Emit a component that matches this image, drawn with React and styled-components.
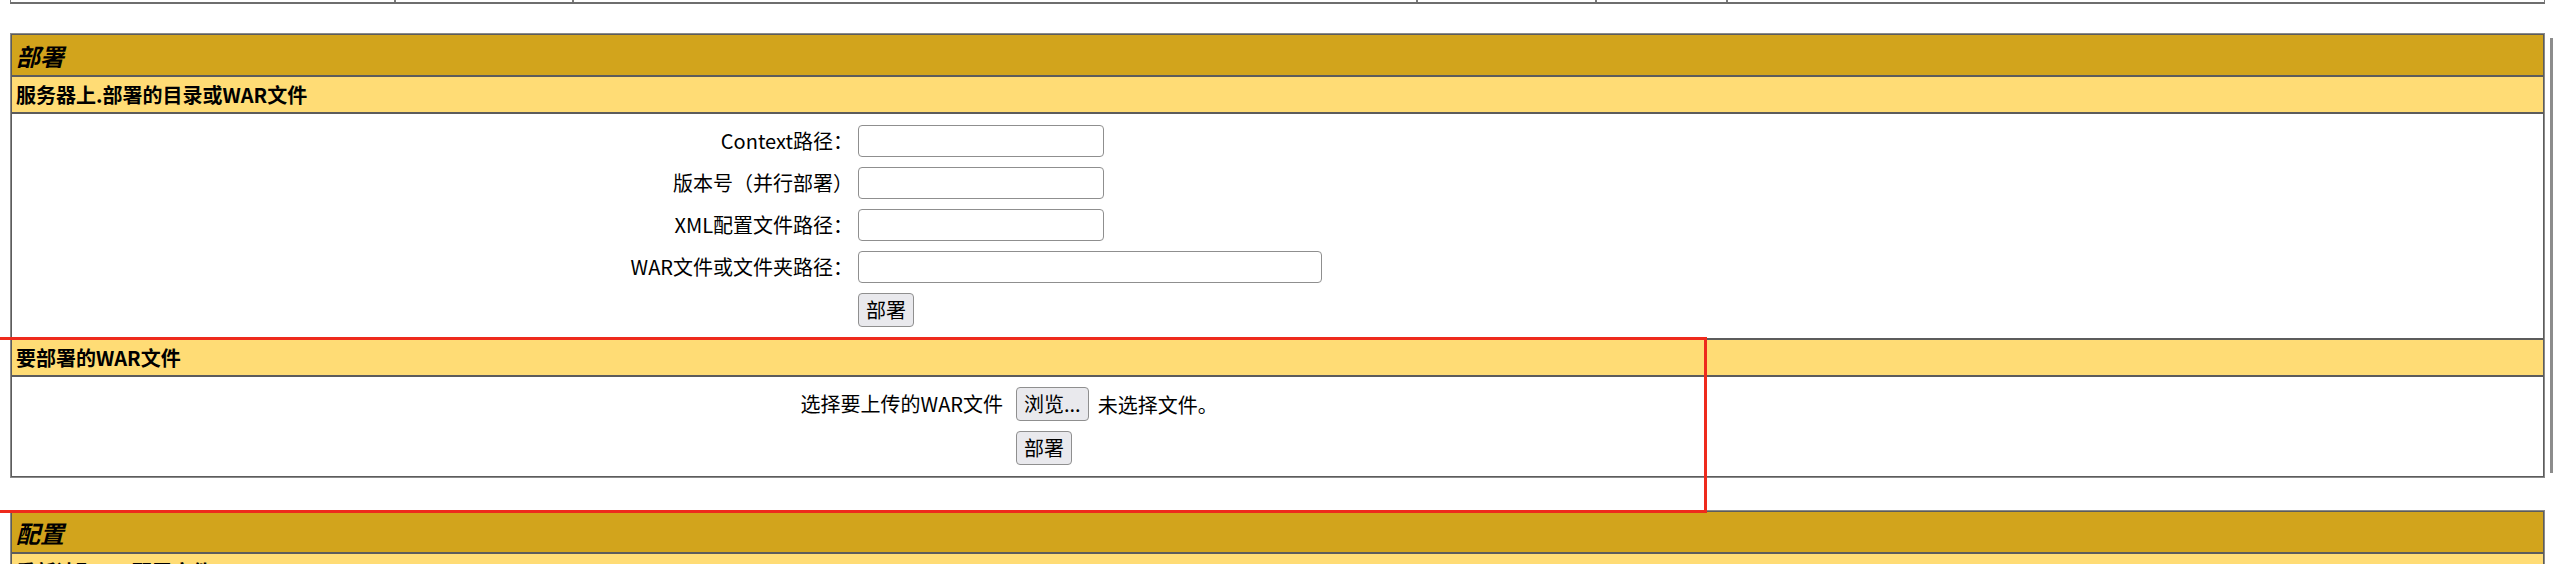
import React from "react";
import styled, { createGlobalStyle } from "styled-components";

const Global = createGlobalStyle`
  html, body {
    margin: 0;
    padding: 0;
    overflow: hidden;
    background: #fff;
  }
  body {
    font-family: "Noto Sans CJK SC", "Noto Sans", sans-serif;
    color: #000;
  }
  * { box-sizing: border-box; }
`;

const Page = styled.div`
  position: relative;
  width: 2556px;
  height: 564px;
  overflow: hidden;
  padding: 0 11px 0 10px;
`;

const TopStrip = styled.div`
  display: flex;
  height: 4px;
  border-left: 1px solid #7a7a7a;
  border-right: 1px solid #7a7a7a;
  border-bottom: 2px solid #6e6e6e;
`;

const StripCell = styled.div`
  flex: ${(p) => (p.$w ? `0 0 ${p.$w}px` : "1 1 auto")};
  border-right: ${(p) => (p.$last ? "none" : "2px solid #7a7a7a")};
`;

const Section = styled.section`
  margin-top: ${(p) => p.$mt}px;
  border: 1px solid #8a8a8a;
  display: flex;
  flex-direction: column;
`;

const Cell = styled.div`
  border: 1px solid #5c5c5c;
`;

const TitleCell = styled(Cell)`
  background: #d2a41c;
  height: 42px;
  padding: 0 4px;
  display: flex;
  align-items: center;
  font-size: 24px;
  font-weight: bold;
  font-style: italic;
`;

const HeaderCell = styled(Cell)`
  background: #ffdc75;
  height: 37px;
  padding: 0 4px;
  display: flex;
  align-items: center;
  font-size: 20px;
  font-weight: bold;
`;

const BodyCell = styled(Cell)`
  background: #fff;
  padding: ${(p) => p.$pt}px 0 ${(p) => p.$pb}px;
`;

const FormGrid = styled.div`
  display: grid;
  grid-template-columns: ${(p) => p.$labelWidth}px auto;
  column-gap: ${(p) => p.$gap}px;
  row-gap: 10px;
  align-items: center;
  justify-items: start;
`;

const Label = styled.span`
  justify-self: end;
  font-size: 20px;
  white-space: nowrap;
  line-height: 1.2;
`;

const TextInput = styled.input`
  width: ${(p) => p.$w}px;
  height: 32px;
  border: 1px solid #8f8f8f;
  border-radius: 4px;
  background: #fff;
  font-size: 20px;
  padding: 0 4px;
  margin: 0;
`;

const Button = styled.button`
  height: 34px;
  padding: 0 7px;
  margin: 0;
  border: 1px solid #8f8f8f;
  border-radius: 4px;
  background: #e9e9ed;
  font-family: "Noto Sans CJK SC", "Noto Sans", sans-serif;
  font-size: 20px;
  line-height: 1;
  color: #000;
`;

const FilePicker = styled.div`
  display: flex;
  align-items: center;
  gap: 9px;
  font-size: 20px;
`;

const Empty = styled.span``;

const RedBox = styled.div`
  position: absolute;
  left: -4px;
  top: 337px;
  width: 1711px;
  height: 176px;
  border: 3px solid #ee2a1c;
  pointer-events: none;
`;

const ScrollThumb = styled.div`
  position: absolute;
  left: 2550px;
  top: 38px;
  width: 3px;
  height: 435px;
  background: #8c8c8c;
`;

const serverFields = [
  { label: "Context路径：", w: 246 },
  { label: "版本号（并行部署）", w: 246 },
  { label: "XML配置文件路径：", w: 246 },
  { label: "WAR文件或文件夹路径：", w: 464 },
];

export default function App() {
  return (
    <>
      <Global />
      <Page>
        <TopStrip>
          <StripCell $w={385} />
          <StripCell $w={178} />
          <StripCell $w={844} />
          <StripCell $w={179} />
          <StripCell $w={131} />
          <StripCell $last />
        </TopStrip>

        <Section $mt={29}>
          <TitleCell>部署</TitleCell>
          <HeaderCell>服务器上.部署的目录或WAR文件</HeaderCell>
          <BodyCell $pt={11} $pb={11}>
            <FormGrid $labelWidth={841} $gap={5}>
              {serverFields.map((f) => (
                <React.Fragment key={f.label}>
                  <Label>{f.label}</Label>
                  <TextInput type="text" $w={f.w} />
                </React.Fragment>
              ))}
              <Empty />
              <Button type="button">部署</Button>
            </FormGrid>
          </BodyCell>
          <HeaderCell>要部署的WAR文件</HeaderCell>
          <BodyCell $pt={10} $pb={11}>
            <FormGrid $labelWidth={991} $gap={13}>
              <Label>选择要上传的WAR文件</Label>
              <FilePicker>
                <Button type="button">浏览...</Button>
                <span>未选择文件。</span>
              </FilePicker>
              <Empty />
              <Button type="button">部署</Button>
            </FormGrid>
          </BodyCell>
        </Section>

        <Section $mt={32}>
          <TitleCell>配置</TitleCell>
          <HeaderCell>重新读取TLS配置文件</HeaderCell>
        </Section>

        <RedBox />
        <ScrollThumb />
      </Page>
    </>
  );
}
